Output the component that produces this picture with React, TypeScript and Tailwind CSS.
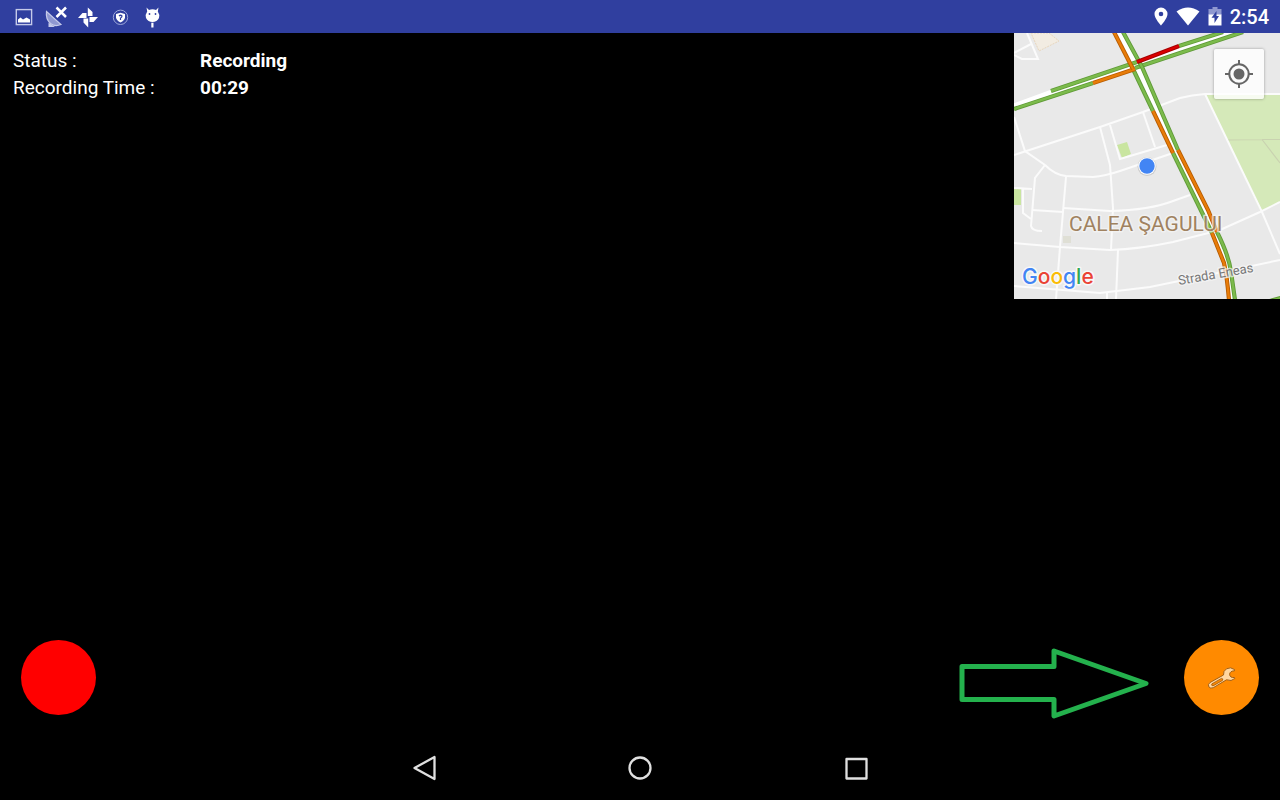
import type { ReactNode } from "react";

type Line = { d: string; color: "green" | "orange" | "red" };

const EDGE = { green: "#5f9a37", orange: "#b85c00", red: "#a50000" };
const CORE = { green: "#7cbb4c", orange: "#e87c08", red: "#dc0000" };

const streets = [
  "M1027 33L1038 59L1022 59L1014 55",
  "M1014 53L1031 44",
  "M1014 155L1100 127L1143 112L1180 98Q1192 95 1205 94H1280",
  "M1205 94L1262 212L1280 254",
  "M1014 117L1025 151L1045 165Q1055 175 1066 176L1093 177Q1105 176 1120 171L1173 153",
  "M1100 127L1110 165L1113 208L1111 250",
  "M1110 125L1120 159L1167 145",
  "M1143 112L1155 147",
  "M1045 165L1035 178L1031 226Q1032 231 1042 231",
  "M1014 188L1032 189M1023 189V213L1031 219",
  "M1032 210L1063 212",
  "M1066 177L1060 247L1056 299",
  "M1063 208L1110 211Q1150 210 1173 201L1190 195",
  "M1014 243L1060 247L1110 250Q1140 249 1173 242L1220 230L1260 212L1280 202",
  "M1014 286L1100 293L1150 287L1280 260",
  "M1118 250L1116 299M1107 293V299",
];

const traffic: Line[] = [
  { d: "M1051 91L1137 62", color: "green" },
  { d: "M1179 46L1223 32", color: "green" },
  { d: "M1014 109L1093 83", color: "green" },
  { d: "M1135 68L1243 32", color: "green" },
  { d: "M1133 69L1153 111", color: "green" },
  { d: "M1173 153L1212 233", color: "green" },
  { d: "M1123 32L1142 67L1178 150", color: "green" },
  { d: "M1217 232Q1229 256 1231 272L1235 300", color: "green" },
  { d: "M1270 301L1281 298", color: "green" },
  { d: "M1137 62L1179 46", color: "red" },
  { d: "M1093 83L1135 69", color: "orange" },
  { d: "M1114 32L1133 69", color: "orange" },
  { d: "M1153 111L1173 153", color: "orange" },
  { d: "M1212 233L1224 263Q1227 276 1229 300", color: "orange" },
  { d: "M1178 150L1208 210L1217 232", color: "orange" },
];

function TrafficMap() {
  return (
    <svg viewBox="1014 33 266 266" className="block size-full" role="img" aria-label="Traffic map">
      <rect x="1014" y="33" width="266" height="266" fill="#e9e9e9" />
      <path d="M1031 33H1049L1059 41L1039 51Z" fill="#f2ece2" stroke="#e8d6bd" strokeDasharray="2 1" />
      <path d="M1206 95H1280V202L1261 212Z" fill="#d5e9b9" />
      <path d="M1228 140L1262 139.500L1280 163M1262 139.500H1280" fill="none" stroke="#c9d2b0" strokeWidth="1.200" />
      <path d="M1117 145L1127 142L1131 154L1122 158Z" fill="#c9e5a0" />
      <rect x="1014" y="189" width="7" height="16" fill="#c9e5a0" />
      <rect x="1063" y="236" width="8" height="7" fill="#dfdfd5" />
      <g fill="none" stroke="#fbfbfb" strokeWidth="2">
        {streets.map((d) => (
          <path key={d} d={d} />
        ))}
      </g>
      <g fill="none" stroke="#fff">
        <path d="M1014 107L1052 93L1232 32" strokeWidth="7" />
        <path d="M1118 32L1138 70L1156 108L1176 152L1214 232L1227 265L1232 300" strokeWidth="6" />
      </g>
      <g fill="none">
        {traffic.map((t) => (
          <g key={t.d}>
            <path d={t.d} stroke={EDGE[t.color]} strokeWidth="4.200" />
            <path d={t.d} stroke={CORE[t.color]} strokeWidth="2.400" />
          </g>
        ))}
      </g>
      <circle cx="1147" cy="166.500" r="9.500" fill="#888" opacity="0.300" />
      <circle cx="1147" cy="166" r="8.700" fill="#fff" />
      <circle cx="1147" cy="166" r="7.700" fill="#4285f4" />
      <g className="font-['Roboto',sans-serif]" stroke="#f5f5f5" strokeOpacity="0.700" strokeWidth="3" strokeLinejoin="round" paintOrder="stroke">
        <text x="1069" y="231" fontSize="21" fill="#a08260">CALEA ŞAGULUI</text>
        <text x="1179" y="285" fontSize="13" fill="#777" transform="rotate(-10 1179 285)">Strada Eneas</text>
      </g>
      <text x="1022" y="284" fontSize="21" className="font-['Inter',sans-serif] font-medium" stroke="#f8f8f8" strokeWidth="3" strokeLinejoin="round" paintOrder="stroke">
        <tspan fill="#4285f4">G</tspan>
        <tspan fill="#ea4335">o</tspan>
        <tspan fill="#fbbc05">o</tspan>
        <tspan fill="#4285f4">g</tspan>
        <tspan fill="#34a853">l</tspan>
        <tspan fill="#ea4335">e</tspan>
      </text>
    </svg>
  );
}

function Glyph({ children }: { children: ReactNode }) {
  return (
    <svg viewBox="0 0 24 24" className="size-6" fill="#fff" aria-hidden="true">
      {children}
    </svg>
  );
}

function StatusBar() {
  return (
    <header className="flex h-[33px] items-center justify-between bg-[#303f9f] pr-[11px] pl-3 text-white">
      <div className="flex items-center gap-2">
        <Glyph>
          <rect x="4.300" y="4.600" width="15.300" height="15" fill="none" stroke="#c5cae9" strokeWidth="1.400" />
          <path d="M6 17.500V14.500L8.500 12.500L11 14.500L14.500 12.500L18 14.500V17.500Z" />
        </Glyph>
        <Glyph>
          <path d="M2.500 6.500Q1.500 14 6.500 18.500Q11 22 17 19.500Z" fill="#8f98d0" stroke="#c5cae9" strokeWidth="1.200" />
          <path d="M4.500 17.500V22H11Z" fill="#c5cae9" />
          <path d="M12.500 2.500L22 12M22 2.500L12.500 12" stroke="#fff" strokeWidth="2.500" />
        </Glyph>
        <Glyph>
          <path d="M11.800 12.500V2.500L16.500 7V11H11.800ZM12 12H22L17.500 17H13.500V12ZM12.200 12V22.500L7.500 17.500V13.500H12.200ZM12 13H2L6.500 8H10.500V13Z" />
        </Glyph>
        <Glyph>
          <circle cx="12.500" cy="12.300" r="7.200" fill="none" stroke="#9fa8da" strokeWidth="1" />
          <path d="M12.500 7.800L17 9.100V12.500Q16.500 15.500 12.500 17.500Q8.500 15.500 8 12.500V9.100Z" />
          <path d="M11 11Q12.500 9.500 14 11Q14 12.500 12.500 13V15" fill="none" stroke="#303f9f" strokeWidth="1.200" />
        </Glyph>
        <Glyph>
          <path d="M6.500 2.500L9 5Q12.500 3.700 16 5L18.500 2.500L17.800 6.500Q20 9.500 19 13Q17 17 12.500 17Q8 17 6 13Q5 9.500 7.200 6.500Z" />
          <path d="M11.300 17.700H13.500V22.500H11.300Z" />
          <circle cx="9.500" cy="9" r="0.900" fill="#303f9f" />
          <circle cx="15.500" cy="9" r="0.900" fill="#303f9f" />
        </Glyph>
      </div>
      <div className="flex items-center gap-2">
        <svg viewBox="0 0 14 20" className="h-5 w-[14px]" fill="#fff" aria-hidden="true">
          <path fillRule="evenodd" d="M7 .5A6.500 6.500 0 0 0 .5 7C.5 11.500 7 18.500 7 18.500S13.500 11.500 13.500 7A6.500 6.500 0 0 0 7 .5ZM7 4.700A2.300 2.300 0 1 1 7 9.300A2.300 2.300 0 0 1 7 4.700Z" />
        </svg>
        <svg viewBox="0 0 24 20" className="h-5 w-6" fill="#fff" aria-hidden="true">
          <path d="M.5 4.500Q12-3.500 23.500 4.500L12 18.500Z" />
        </svg>
        <svg viewBox="0 0 14 20" className="h-5 w-[14px]" aria-hidden="true">
          <path d="M4.500 0H9.500V2H13.500V8H.5V2H4.500Z" fill="#8f98d0" />
          <path d="M.5 7.500H13.500V18.500H.5Z" fill="#fff" />
          <path d="M8.500 4L3.500 10.800H6.500V16L11 9H8.500Z" fill="#303f9f" />
        </svg>
        <time className="text-xl leading-6 font-medium">2:54</time>
      </div>
    </header>
  );
}

export default function App() {
  return (
    <div className="flex min-h-screen flex-col bg-black font-['Roboto',sans-serif] text-white">
      <StatusBar />
      <main className="flex flex-1 flex-col justify-between">
        <div className="flex items-start justify-between">
          <dl className="grid grid-cols-[187px_auto] pt-[14px] pl-[13px] text-[19px] leading-[27px]">
            <dt>Status :</dt>
            <dd className="font-bold">Recording</dd>
            <dt>Recording Time :</dt>
            <dd className="font-bold">00:29</dd>
          </dl>
          <section className="relative size-[266px] shrink-0 overflow-hidden" aria-label="Map">
            <TrafficMap />
            <button type="button" aria-label="My location" className="absolute top-4 right-4 flex size-[50px] items-center justify-center rounded-xs bg-white/80 shadow-[0_0_3px_rgba(0,0,0,0.35)]">
              <svg viewBox="0 0 30 30" className="size-[30px]" fill="none" stroke="#666" strokeWidth="2" aria-hidden="true">
                <circle cx="15" cy="15" r="9.700" />
                <circle cx="15" cy="15" r="5.500" fill="#666" stroke="none" />
                <path d="M15 1V6M15 24V29M1 15H6M24 15H29" />
              </svg>
            </button>
          </section>
        </div>
        <div className="flex items-center justify-between px-[21px] pb-4">
          <button type="button" aria-label="Stop recording" className="size-[75px] rounded-full bg-[#ff0000]" />
          <div className="flex items-center gap-[34px]">
            <svg viewBox="0 0 192 72" className="mt-[13px] h-[72px] w-48" fill="none" stroke="#24b14d" strokeWidth="5" strokeLinejoin="round" aria-hidden="true">
              <path d="M4 18.500H96V3L188 35.500L96 68V51.500H4Z" />
            </svg>
            <button type="button" aria-label="Settings" className="flex size-[75px] items-center justify-center rounded-full bg-[#ff8a00]">
              <svg viewBox="0 0 32 24" className="h-6 w-8" fill="#ffd6a0" stroke="#a35f14" strokeWidth="1" strokeLinejoin="round" aria-hidden="true">
                <path d="M28.500 3.500Q24.500 .500 20.500 2.800Q17 5 17.500 9L4 16.500Q1.500 18.500 2.800 20.800Q4.500 23 7.300 21.700L20.500 13.800Q25.500 15.800 28.800 12.500L28.500 11.500Q23.800 12 23.600 8.200Q24 5 28.500 4.800Z" />
                <path d="M6 17.800L15.500 12.400Q17.500 12.500 16.500 14.400L7 19.900Q4.800 19.500 6 17.800Z" fill="#ff8a00" strokeWidth="0.900" />
              </svg>
            </button>
          </div>
        </div>
      </main>
      <nav className="flex h-16 items-center justify-center gap-[184px]" aria-label="System">
        <button type="button" aria-label="Back" className="size-8">
          <svg viewBox="0 0 32 32" className="size-8" fill="none" stroke="#e0e0e0" strokeWidth="2.300" strokeLinejoin="round">
            <path d="M26.500 5V27L6.500 16Z" />
          </svg>
        </button>
        <button type="button" aria-label="Home" className="size-8">
          <svg viewBox="0 0 32 32" className="size-8" fill="none" stroke="#e0e0e0" strokeWidth="2.300">
            <circle cx="16" cy="16" r="10.500" />
          </svg>
        </button>
        <button type="button" aria-label="Recent apps" className="size-8">
          <svg viewBox="0 0 32 32" className="size-8" fill="none" stroke="#e0e0e0" strokeWidth="2.300" strokeLinejoin="round">
            <rect x="6.500" y="7" width="20" height="19.500" />
          </svg>
        </button>
      </nav>
    </div>
  );
}
